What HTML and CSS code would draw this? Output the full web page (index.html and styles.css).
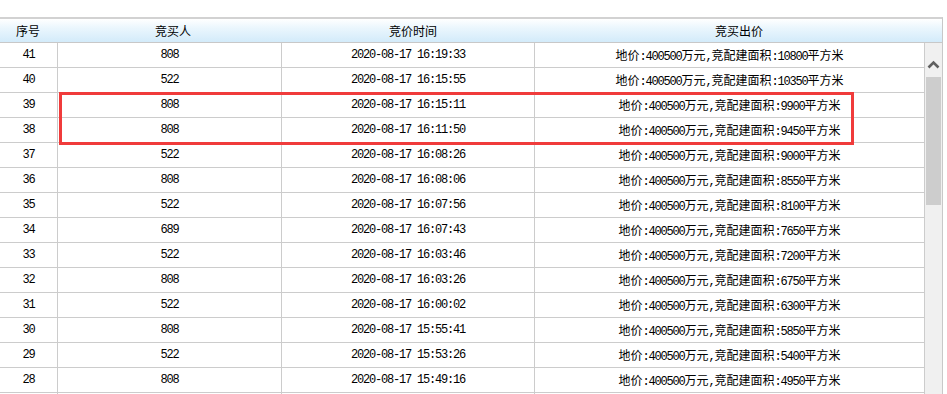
FILE: index.html
```html
<!DOCTYPE html>
<html lang="zh-CN">
<head>
<meta charset="utf-8">
<title>竞买记录</title>
<link rel="stylesheet" href="styles.css">
</head>
<body>
<div class="wrap">
  <div class="head">
    <div class="hc">序号</div>
    <div class="hc">竞买人</div>
    <div class="hc">竞价时间</div>
    <div class="hc">竞买出价</div>
  </div>
  <div class="body">
    <div class="rows">
      <div class="row"><div class="c m">41</div><div class="c m">808</div><div class="c m">2020-08-17 16:19:33</div><div class="c">地价<span class="a">:400500</span>万元<span class="a">,</span>竞配建面积<span class="a">:10800</span>平方米</div></div>
      <div class="row"><div class="c m">40</div><div class="c m">522</div><div class="c m">2020-08-17 16:15:55</div><div class="c">地价<span class="a">:400500</span>万元<span class="a">,</span>竞配建面积<span class="a">:10350</span>平方米</div></div>
      <div class="row"><div class="c m">39</div><div class="c m">808</div><div class="c m">2020-08-17 16:15:11</div><div class="c">地价<span class="a">:400500</span>万元<span class="a">,</span>竞配建面积<span class="a">:9900</span>平方米</div></div>
      <div class="row"><div class="c m">38</div><div class="c m">808</div><div class="c m">2020-08-17 16:11:50</div><div class="c">地价<span class="a">:400500</span>万元<span class="a">,</span>竞配建面积<span class="a">:9450</span>平方米</div></div>
      <div class="row"><div class="c m">37</div><div class="c m">522</div><div class="c m">2020-08-17 16:08:26</div><div class="c">地价<span class="a">:400500</span>万元<span class="a">,</span>竞配建面积<span class="a">:9000</span>平方米</div></div>
      <div class="row"><div class="c m">36</div><div class="c m">808</div><div class="c m">2020-08-17 16:08:06</div><div class="c">地价<span class="a">:400500</span>万元<span class="a">,</span>竞配建面积<span class="a">:8550</span>平方米</div></div>
      <div class="row"><div class="c m">35</div><div class="c m">522</div><div class="c m">2020-08-17 16:07:56</div><div class="c">地价<span class="a">:400500</span>万元<span class="a">,</span>竞配建面积<span class="a">:8100</span>平方米</div></div>
      <div class="row"><div class="c m">34</div><div class="c m">689</div><div class="c m">2020-08-17 16:07:43</div><div class="c">地价<span class="a">:400500</span>万元<span class="a">,</span>竞配建面积<span class="a">:7650</span>平方米</div></div>
      <div class="row"><div class="c m">33</div><div class="c m">522</div><div class="c m">2020-08-17 16:03:46</div><div class="c">地价<span class="a">:400500</span>万元<span class="a">,</span>竞配建面积<span class="a">:7200</span>平方米</div></div>
      <div class="row"><div class="c m">32</div><div class="c m">808</div><div class="c m">2020-08-17 16:03:26</div><div class="c">地价<span class="a">:400500</span>万元<span class="a">,</span>竞配建面积<span class="a">:6750</span>平方米</div></div>
      <div class="row"><div class="c m">31</div><div class="c m">522</div><div class="c m">2020-08-17 16:00:02</div><div class="c">地价<span class="a">:400500</span>万元<span class="a">,</span>竞配建面积<span class="a">:6300</span>平方米</div></div>
      <div class="row"><div class="c m">30</div><div class="c m">808</div><div class="c m">2020-08-17 15:55:41</div><div class="c">地价<span class="a">:400500</span>万元<span class="a">,</span>竞配建面积<span class="a">:5850</span>平方米</div></div>
      <div class="row"><div class="c m">29</div><div class="c m">522</div><div class="c m">2020-08-17 15:53:26</div><div class="c">地价<span class="a">:400500</span>万元<span class="a">,</span>竞配建面积<span class="a">:5400</span>平方米</div></div>
      <div class="row"><div class="c m">28</div><div class="c m">808</div><div class="c m">2020-08-17 15:49:16</div><div class="c">地价<span class="a">:400500</span>万元<span class="a">,</span>竞配建面积<span class="a">:4950</span>平方米</div></div>
      <div class="row"><div class="c"></div><div class="c"></div><div class="c"></div><div class="c"></div></div>
    </div>
    <div class="scrollbar">
      <div class="sb-btn">
        <svg width="17" height="34" viewBox="0 0 17 34"><polyline points="3.5,24.5 8.5,19.5 13.5,24.5" fill="none" stroke="#606060" stroke-width="2.6"/></svg>
      </div>
      <div class="sb-thumb"></div>
    </div>
  </div>
  <div class="mark"></div>
</div>
</body>
</html>
```

FILE: styles.css
```css
html, body {
  margin: 0;
  padding: 0;
  background: #ffffff;
}
body {
  font-family: "Noto Sans CJK SC", "Liberation Sans", sans-serif;
  font-size: 12px;
  color: #000000;
}
.wrap {
  position: relative;
  margin-top: 17px;
  width: 943px;
}
.head {
  display: grid;
  grid-template-columns: 56px 234px 246px 1fr;
  height: 23px;
  border-top: 2px solid #d2d2d2;
  border-bottom: 1px solid #c8c8c8;
  border-right: 1px solid #c8c8c8;
  background: linear-gradient(to bottom, #ffffff 0%, #eaf6fd 40%, #d3ebfa 100%);
}
.hc {
  text-align: center;
  line-height: 23px;
  font-size: 12px;
}
.body {
  display: flex;
  height: 351px;
  overflow: hidden;
  border-right: 1px solid #c8c8c8;
}
.rows {
  width: 925px;
  flex: none;
}
.row {
  display: grid;
  grid-template-columns: 58px 224px 253px 390px;
  height: 25px;
}
.c {
  box-sizing: border-box;
  border-right: 1px solid #cccccc;
  border-bottom: 1px solid #cccccc;
  text-align: center;
  line-height: 24px;
  height: 25px;
  white-space: nowrap;
  overflow: hidden;
}
.m, .a {
  font-family: "Liberation Mono", "DejaVu Sans Mono", monospace;
  font-size: 12px;
  letter-spacing: -1.2px;
}
.scrollbar {
  width: 17px;
  flex: none;
  background: #f0f0f0;
  display: flex;
  flex-direction: column;
}
.sb-btn {
  height: 34px;
}
.sb-btn svg {
  display: block;
}
.sb-thumb {
  margin: 0 1px;
  height: 128px;
  background: #cdcdcd;
}
.mark {
  position: absolute;
  left: 59px;
  top: 75px;
  width: 795px;
  height: 53px;
  box-sizing: border-box;
  border: 3px solid #f03b3b;
}
```
